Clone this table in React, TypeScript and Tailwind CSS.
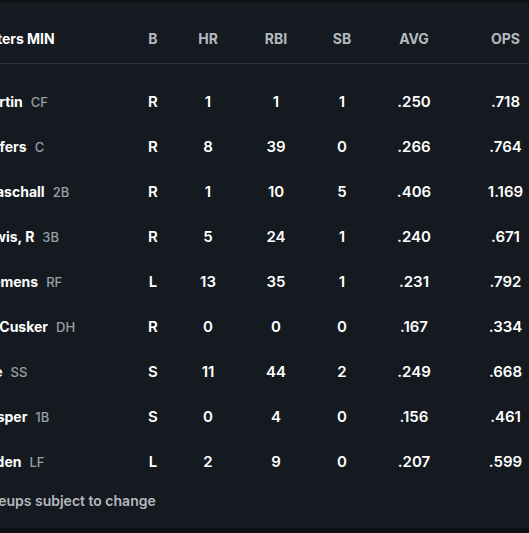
const players = [
  { name: "Martin", pos: "CF", b: "R", hr: "1", rbi: "1", sb: "1", avg: ".250", ops: ".718" },
  { name: "Jeffers", pos: "C", b: "R", hr: "8", rbi: "39", sb: "0", avg: ".266", ops: ".764" },
  { name: "Keaschall", pos: "2B", b: "R", hr: "1", rbi: "10", sb: "5", avg: ".406", ops: "1.169" },
  { name: "Lewis, R", pos: "3B", b: "R", hr: "5", rbi: "24", sb: "1", avg: ".240", ops: ".671" },
  { name: "Clemens", pos: "RF", b: "L", hr: "13", rbi: "35", sb: "1", avg: ".231", ops: ".792" },
  { name: "McCusker", pos: "DH", b: "R", hr: "0", rbi: "0", sb: "0", avg: ".167", ops: ".334" },
  { name: "Lee", pos: "SS", b: "S", hr: "11", rbi: "44", sb: "2", avg: ".249", ops: ".668" },
  { name: "Gasper", pos: "1B", b: "S", hr: "0", rbi: "4", sb: "0", avg: ".156", ops: ".461" },
  { name: "Roden", pos: "LF", b: "L", hr: "2", rbi: "9", sb: "0", avg: ".207", ops: ".599" },
];

const cols = "grid grid-cols-[148px_54px_56px_80px_52px_92px_91px]";

export default function App() {
  return (
    <div
      className="w-[529px] h-[533px] overflow-hidden bg-[#0d1014] flex flex-col"
      style={{ fontFamily: "Inter, 'Noto Sans', sans-serif" }}
    >
      <div className="mt-[2px] h-[526px] bg-[#141a20] overflow-hidden">
        <div className="-ml-[22px] w-[573px]">
          <div className={`${cols} items-center pt-[27px] pb-[14px] border-b border-[#2a3139] text-[14px] leading-5 font-bold text-[#b4b9bf]`}>
            <div className="text-white">Hitters MIN</div>
            <div className="text-center">B</div>
            <div className="text-center">HR</div>
            <div className="text-center">RBI</div>
            <div className="text-center">SB</div>
            <div className="text-center">AVG</div>
            <div className="text-center">OPS</div>
          </div>
          <div className="pt-[16px]">
            {players.map((p) => (
              <div key={p.name} className={`${cols} items-center h-[45px] text-[15px] font-semibold text-white`}>
                <div className="flex items-baseline gap-2 whitespace-nowrap mb-[2px]">
                  <span className="text-[14px] font-bold">{p.name}</span>
                  <span className="text-[13px] font-medium text-[#9aa0a7]">{p.pos}</span>
                </div>
                <div className="text-center">{p.b}</div>
                <div className="text-center">{p.hr}</div>
                <div className="text-center">{p.rbi}</div>
                <div className="text-center">{p.sb}</div>
                <div className="text-center">{p.avg}</div>
                <div className="text-center">{p.ops}</div>
              </div>
            ))}
          </div>
          <div className="pt-[6px] text-[14px] leading-5 font-semibold text-[#b4b9bf]">
            Lineups subject to change
          </div>
        </div>
      </div>
    </div>
  );
}
